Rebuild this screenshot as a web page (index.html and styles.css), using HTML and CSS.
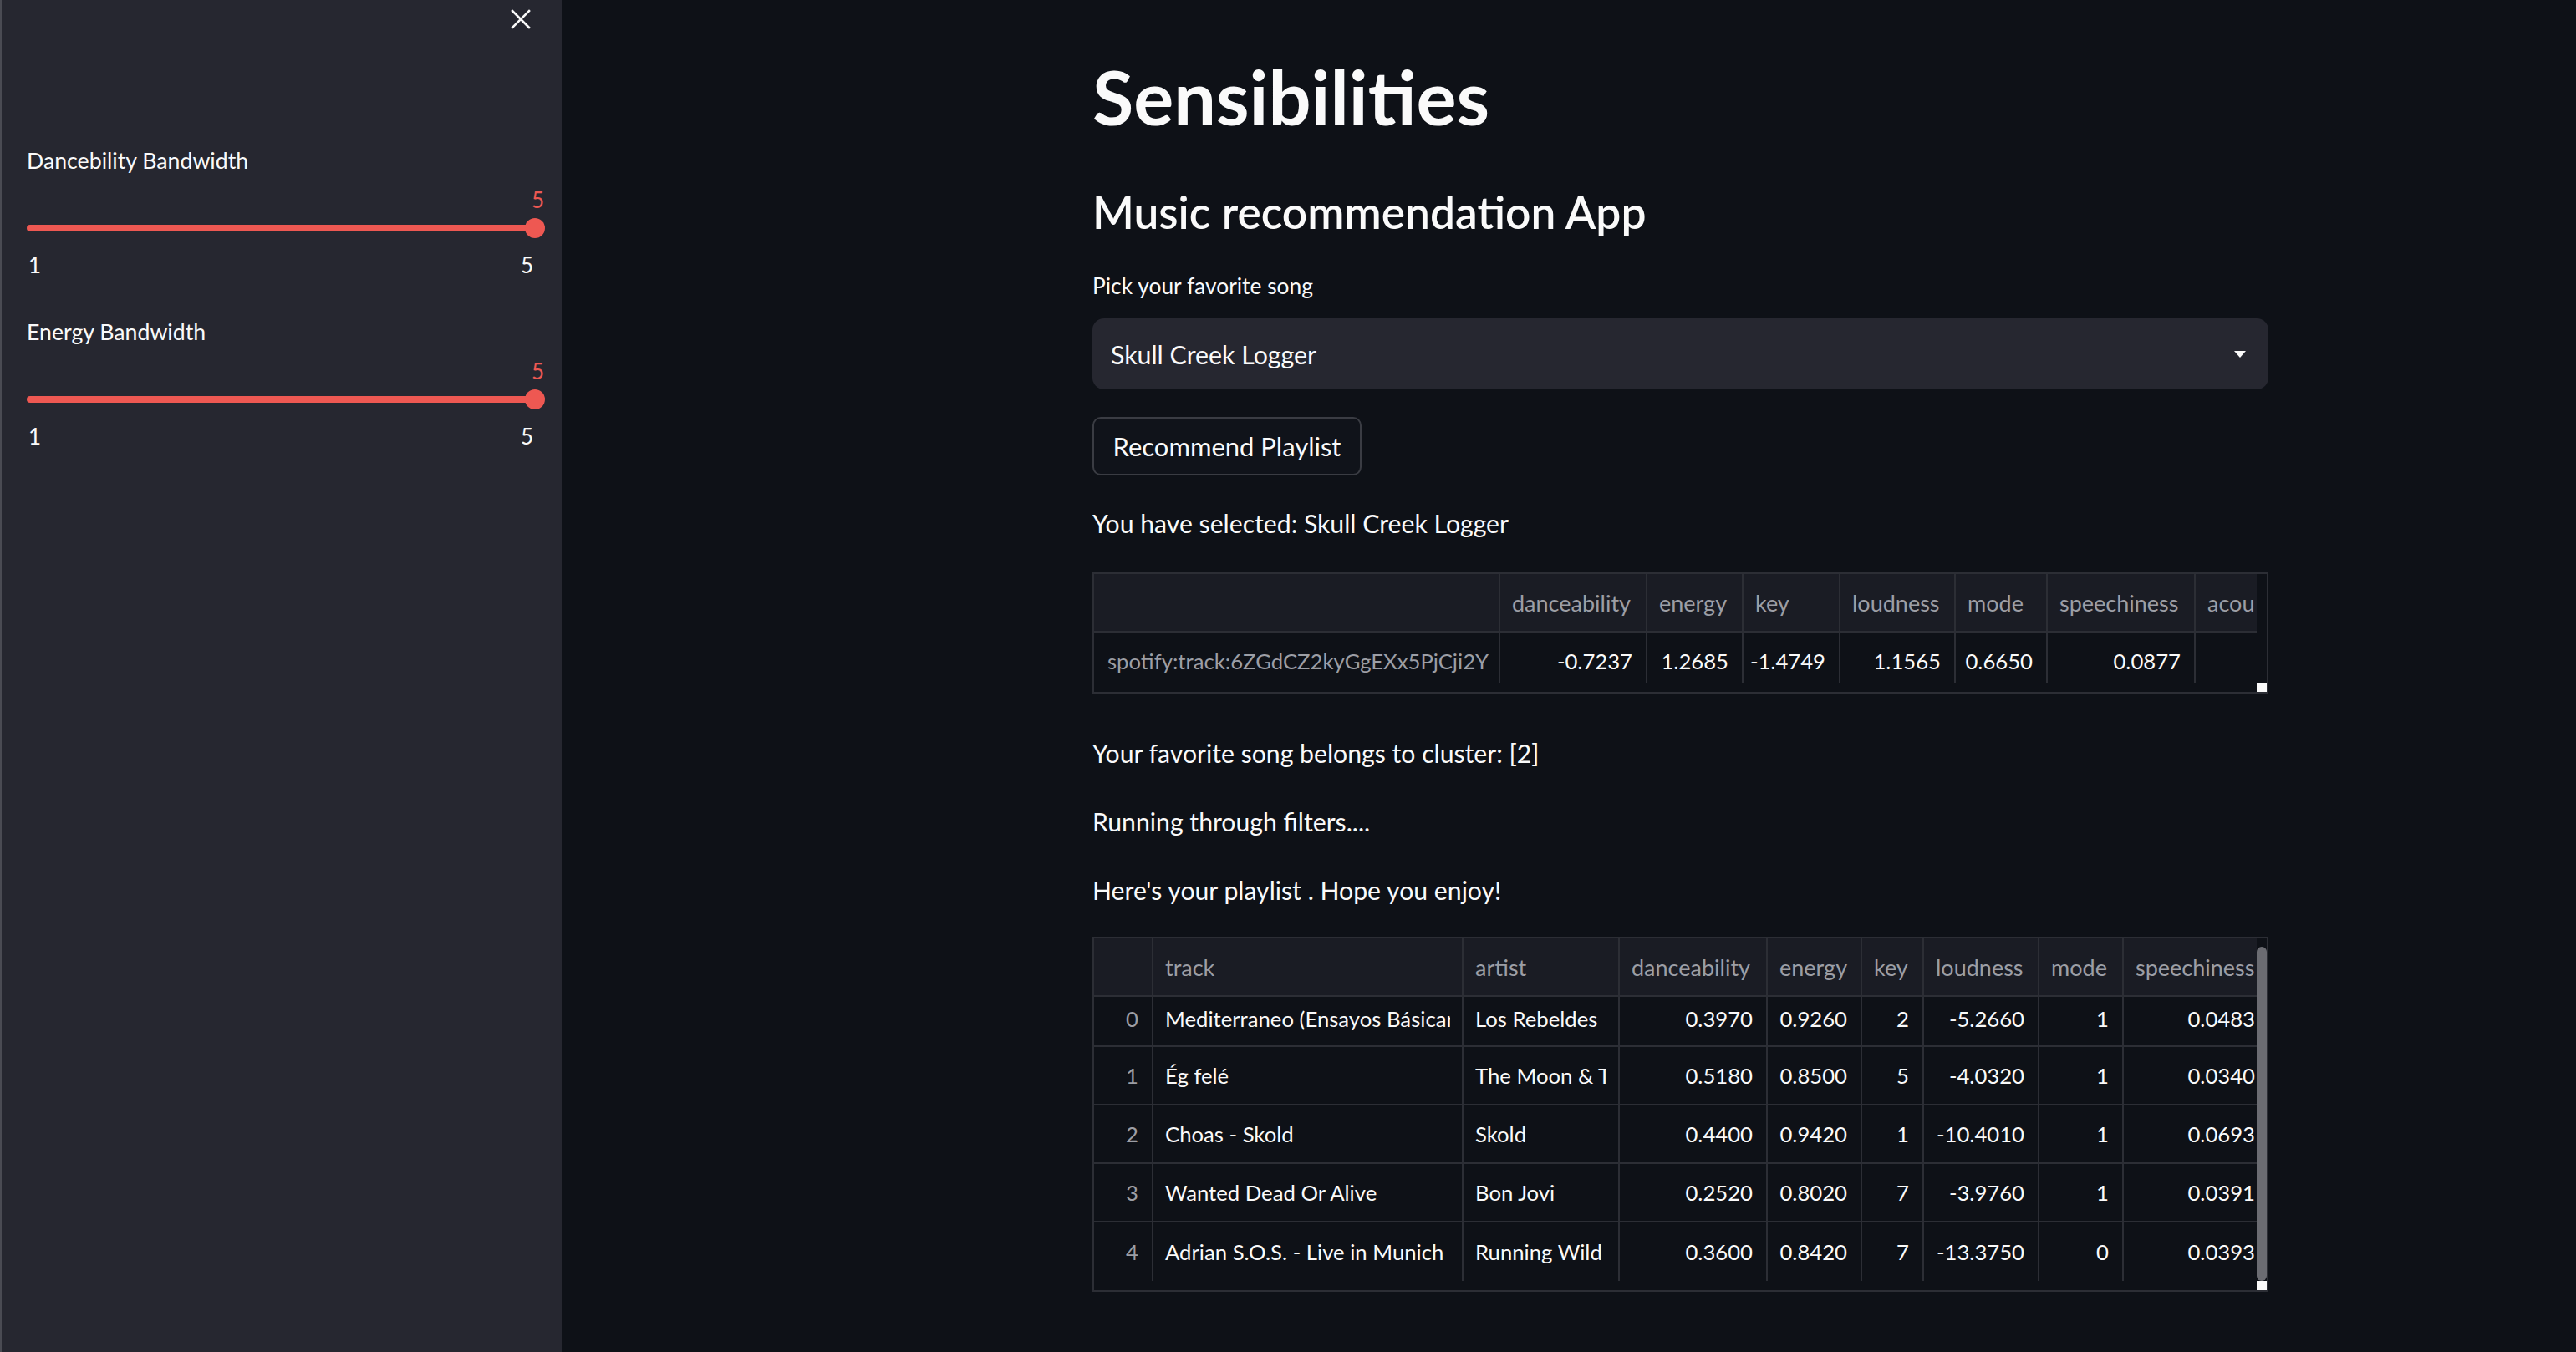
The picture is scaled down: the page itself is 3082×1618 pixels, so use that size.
FILE: index.html
```html
<!DOCTYPE html>
<html lang="en">
<head>
<meta charset="utf-8">
<title>Sensibilities</title>
<link rel="stylesheet" href="styles.css">
</head>
<body>
<div class="app">
  <aside class="sidebar">
    <div class="sb-top">
      <button class="close-btn" aria-label="Close sidebar">
        <svg width="24" height="24" viewBox="0 0 24 24"><path d="M2 2 L22 22 M22 2 L2 22" stroke="#fafafa" stroke-width="2.6" fill="none" stroke-linecap="square"/></svg>
      </button>
    </div>
    <div class="sb-label first">Dancebility Bandwidth</div>
    <div class="slider">
      <div class="slider-value">5</div>
      <div class="slider-track"><div class="slider-thumb"></div></div>
      <div class="slider-ticks"><span>1</span><span>5</span></div>
    </div>
    <div class="sb-label second">Energy Bandwidth</div>
    <div class="slider">
      <div class="slider-value">5</div>
      <div class="slider-track"><div class="slider-thumb"></div></div>
      <div class="slider-ticks"><span>1</span><span>5</span></div>
    </div>
  </aside>
  <main class="main">
    <div class="block">
      <h1 class="title">Sensibilities</h1>
      <h2 class="subtitle">Music recommendation App</h2>
      <div class="field-label">Pick your favorite song</div>
      <div class="select">
        <span>Skull Creek Logger</span>
        <svg class="caret" width="14" height="8" viewBox="0 0 14 8"><path d="M0 0 H14 L7 8 Z" fill="#fafafa"/></svg>
      </div>
      <button class="btn">Recommend Playlist</button>
      <p class="txt t-selected">You have selected: Skull Creek Logger</p>

      <div class="df df1">
        <div class="df-body">
          <div class="df-grid">
            <div class="df-row head">
              <div class="c"></div>
              <div class="c">danceability</div>
              <div class="c">energy</div>
              <div class="c">key</div>
              <div class="c">loudness</div>
              <div class="c">mode</div>
              <div class="c">speechiness</div>
              <div class="c">acou</div>
            </div>
            <div class="df-row last">
              <div class="c idx">spotify:track:6ZGdCZ2kyGgEXx5PjCji2Y</div>
              <div class="c num">-0.7237</div>
              <div class="c num">1.2685</div>
              <div class="c num">-1.4749</div>
              <div class="c num">1.1565</div>
              <div class="c num">0.6650</div>
              <div class="c num">0.0877</div>
              <div class="c num"></div>
            </div>
          </div>
          <div class="df-vscroll"></div>
        </div>
        <div class="df-hscroll"><div class="df-corner"></div></div>
      </div>

      <p class="txt t-cluster">Your favorite song belongs to cluster: [2]</p>
      <p class="txt t-running">Running through filters....</p>
      <p class="txt t-here">Here's your playlist . Hope you enjoy!</p>

      <div class="df df2">
        <div class="df-body">
          <div class="df-grid">
            <div class="df-row head">
              <div class="c"></div>
              <div class="c">track</div>
              <div class="c">artist</div>
              <div class="c">danceability</div>
              <div class="c">energy</div>
              <div class="c">key</div>
              <div class="c">loudness</div>
              <div class="c">mode</div>
              <div class="c">speechiness</div>
            </div>
            <div class="df-row first">
              <div class="c idx">0</div>
              <div class="c"><span class="clip">Mediterraneo (Ensayos Básicar</span></div>
              <div class="c">Los Rebeldes</div>
              <div class="c num">0.3970</div>
              <div class="c num">0.9260</div>
              <div class="c num">2</div>
              <div class="c num">-5.2660</div>
              <div class="c num">1</div>
              <div class="c num">0.0483</div>
            </div>
            <div class="df-row">
              <div class="c idx">1</div>
              <div class="c">Ég felé</div>
              <div class="c"><span class="clip">The Moon &amp; Th</span></div>
              <div class="c num">0.5180</div>
              <div class="c num">0.8500</div>
              <div class="c num">5</div>
              <div class="c num">-4.0320</div>
              <div class="c num">1</div>
              <div class="c num">0.0340</div>
            </div>
            <div class="df-row">
              <div class="c idx">2</div>
              <div class="c">Choas - Skold</div>
              <div class="c">Skold</div>
              <div class="c num">0.4400</div>
              <div class="c num">0.9420</div>
              <div class="c num">1</div>
              <div class="c num">-10.4010</div>
              <div class="c num">1</div>
              <div class="c num">0.0693</div>
            </div>
            <div class="df-row">
              <div class="c idx">3</div>
              <div class="c">Wanted Dead Or Alive</div>
              <div class="c">Bon Jovi</div>
              <div class="c num">0.2520</div>
              <div class="c num">0.8020</div>
              <div class="c num">7</div>
              <div class="c num">-3.9760</div>
              <div class="c num">1</div>
              <div class="c num">0.0391</div>
            </div>
            <div class="df-row last">
              <div class="c idx">4</div>
              <div class="c">Adrian S.O.S. - Live in Munich</div>
              <div class="c">Running Wild</div>
              <div class="c num">0.3600</div>
              <div class="c num">0.8420</div>
              <div class="c num">7</div>
              <div class="c num">-13.3750</div>
              <div class="c num">0</div>
              <div class="c num">0.0393</div>
            </div>
          </div>
          <div class="df-vscroll"><div class="df-thumb"></div></div>
        </div>
        <div class="df-hscroll"><div class="df-corner"></div></div>
      </div>
    </div>
  </main>
</div>
</body>
</html>
```

FILE: styles.css
```css
* { box-sizing: border-box; }

html, body {
  margin: 0;
  padding: 0;
  background: #0e1117;
  color: #fafafa;
  font-family: Lato, "Open Sans", "Liberation Sans", sans-serif;
}

.app {
  display: flex;
  min-height: 1618px;
}

/* ---------- sidebar ---------- */
.sidebar {
  width: 672px;
  flex: 0 0 672px;
  background: #262730;
  border-left: 2px solid #4a4b53;
  padding: 0 32px 0 30px;
  display: flex;
  flex-direction: column;
}

.sb-top {
  display: flex;
  justify-content: flex-end;
  padding-top: 11px;
  margin-right: 5px;
}

.close-btn {
  width: 24px;
  height: 24px;
  padding: 0;
  border: 0;
  background: transparent;
  display: flex;
}

.sb-label {
  font-size: 26.7px;
  line-height: 40px;
  height: 40px;
}
.sb-label.first { margin-top: 137px; }
.sb-label.second { margin-top: 40px; }

.slider {
  display: flex;
  flex-direction: column;
}

.slider-value {
  color: #ee5852;
  font-size: 26px;
  line-height: 40px;
  height: 40px;
  text-align: right;
  margin-top: 7px;
  margin-right: -11px;
}

.slider-track {
  position: relative;
  height: 28px;
  display: flex;
  align-items: center;
}
.slider-track::before {
  content: "";
  display: block;
  width: 100%;
  height: 8px;
  border-radius: 4px;
  background: #ee5852;
}
.slider-thumb {
  position: absolute;
  right: -12px;
  top: 2px;
  width: 24px;
  height: 24px;
  border-radius: 50%;
  background: #ee5852;
}

.slider-ticks {
  display: flex;
  justify-content: space-between;
  font-size: 26px;
  line-height: 40px;
  height: 40px;
  margin-top: 10px;
  padding: 0 2px 0 2px;
}

/* ---------- main ---------- */
.main {
  flex: 1;
  padding-left: 635px;
}

.block {
  width: 1407px;
  display: flex;
  flex-direction: column;
  align-items: flex-start;
}

.title {
  margin: 62px 0 0 0;
  font-size: 90px;
  line-height: 106px;
  font-weight: 700;
}

.subtitle {
  margin: 50px 0 0 0;
  font-size: 53.3px;
  line-height: 70px;
  font-weight: 600;
}

.field-label {
  margin-top: 34px;
  font-size: 26.4px;
  line-height: 40px;
}

.select {
  margin-top: 19px;
  width: 100%;
  height: 85px;
  background: #262730;
  border-radius: 14px;
  display: flex;
  align-items: center;
  justify-content: space-between;
  padding: 0 27px 0 22px;
  font-size: 30.3px;
  line-height: 48px;
}

.btn {
  margin-top: 33px;
  height: 70px;
  width: 322px;
  background: #10131a;
  border: 2px solid #3a3c43;
  border-radius: 10px;
  color: #fafafa;
  font-family: inherit;
  font-size: 31px;
  line-height: 48px;
  padding: 0;
}

.txt {
  margin: 0;
  font-size: 30.2px;
  line-height: 48px;
}
.t-selected { margin-top: 33px; }
.t-cluster { margin-top: 47px; }
.t-running { margin-top: 34px; }
.t-here { margin-top: 34px; }

/* ---------- dataframes ---------- */
.df {
  width: 100%;
  border: 2px solid #2c2e35;
  background: #0e1117;
  display: flex;
  flex-direction: column;
  margin-top: 32px;
}
.df1 { margin-top: 35px; }

.df-body {
  display: flex;
}

.df-grid {
  width: 1391px;
  overflow: hidden;
}

.df-vscroll {
  width: 12px;
  display: flex;
  flex-direction: column;
  padding-top: 10px;
}

.df-thumb {
  flex: 1;
  border-radius: 6px;
  background: #6b6c72;
}

.df-hscroll {
  height: 11px;
  display: flex;
  justify-content: flex-end;
}

.df-corner {
  width: 12px;
  height: 11px;
  background: #fafafa;
}

.df-row {
  display: grid;
  font-size: 25.7px;
  border-bottom: 2px solid #2c2e35;
}
.df-row.last { border-bottom: 0; }

.df1 .df-row {
  grid-template-columns: 486px 176px 115px 116px 138px 110px 177px 73px;
  height: 60px;
}
.df2 .df-row {
  grid-template-columns: 71px 371px 187px 177px 113px 74px 138px 101px 159px;
  height: 70px;
}
.df2 .df-row.first { height: 60px; }
.df .df-row.head { height: 70px; background: #1a1c24; font-size: 27px; }

.df1 .df-row.last .c { padding-top: 7px; }
.df2 .df-row.first .c { padding-bottom: 6px; }

.c {
  display: flex;
  align-items: center;
  padding: 0 14px 0 14px;
  white-space: nowrap;
  overflow: hidden;
  border-right: 2px solid #2c2e35;
  color: #fafafa;
  min-width: 0;
}
.c:last-child { border-right: 0; }
.clip {
  display: block;
  overflow: hidden;
  min-width: 0;
  flex: 1;
}
.head .c { color: #9c9ea5; }
.c.num { justify-content: flex-end; padding-right: 16px; }
.c.idx { color: #9c9ea5; }
.df1 .c.idx { padding-left: 16px; }
.df2 .c.idx { justify-content: flex-end; padding-right: 16px; }
.df1 .head .c:last-child,
.df2 .head .c:last-child { padding-right: 0; }
.df2 .df-row .c:last-child { padding-right: 2px; }
```
